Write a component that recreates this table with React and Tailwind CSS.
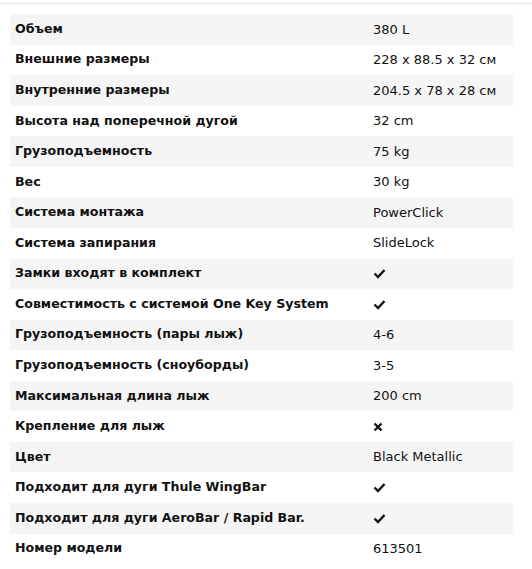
const rows = [
  ['Объем', '380 L'],
  ['Внешние размеры', '228 x 88.5 x 32 см'],
  ['Внутренние размеры', '204.5 x 78 x 28 см'],
  ['Высота над поперечной дугой', '32 cm'],
  ['Грузоподъемность', '75 kg'],
  ['Вес', '30 kg'],
  ['Система монтажа', 'PowerClick'],
  ['Система запирания', 'SlideLock'],
  ['Замки входят в комплект', 'yes'],
  ['Совместимость с системой One Key System', 'yes'],
  ['Грузоподъемность (пары лыж)', '4-6'],
  ['Грузоподъемность (сноуборды)', '3-5'],
  ['Максимальная длина лыж', '200 cm'],
  ['Крепление для лыж', 'no'],
  ['Цвет', 'Black Metallic'],
  ['Подходит для дуги Thule WingBar', 'yes'],
  ['Подходит для дуги AeroBar / Rapid Bar.', 'yes'],
  ['Номер модели', '613501'],
]

const Check = () => (
  <svg width="13" height="11" viewBox="0 0 13 11" className="block">
    <path d="M1.5 5.5 L5 9 L11.5 2" fill="none" stroke="#111" strokeWidth="2.4" />
  </svg>
)

const Cross = () => (
  <svg width="10" height="10" viewBox="0 0 10 10" className="block">
    <path d="M1.5 1.5 L8.5 8.5 M8.5 1.5 L1.5 8.5" fill="none" stroke="#111" strokeWidth="2.4" />
  </svg>
)

export default function App() {
  return (
    <div className="w-[532px] h-[569px] bg-white font-['DejaVu_Sans',Verdana,sans-serif] text-[13px] text-[#111]">
      <div className="h-[3px]" />
      <div className="h-px bg-[#e6e6e6]" />
      <div className="pt-[10px] px-[10px] w-[523px]">
        {rows.map(([label, value], i) => (
          <div
            key={label}
            className={`flex items-center h-[30.57px] ${i % 2 === 0 ? 'bg-[#f5f5f5]' : 'bg-white'}`}
          >
            <div className="w-[363px] pl-[5px] font-bold text-[12.6px] whitespace-nowrap">{label}</div>
            <div className="flex-1 whitespace-nowrap">
              {value === 'yes' ? <Check /> : value === 'no' ? <Cross /> : value}
            </div>
          </div>
        ))}
      </div>
    </div>
  )
}
